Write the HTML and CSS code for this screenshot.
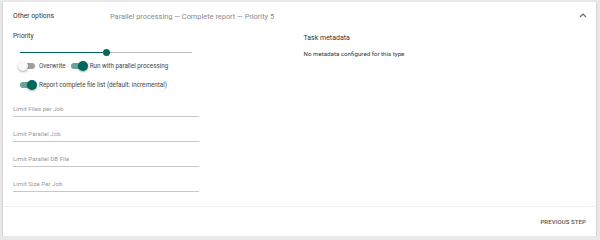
FILE: index.html
```html
<!DOCTYPE html>
<html lang="en">
<head>
    <meta charset="UTF-8">
    <title>Other options</title>
    <link rel="stylesheet" href="styles.css">
</head>
<body>
    <div class="card">
        <div class="panel-header">
            <span class="panel-title">Other options</span>
            <span class="panel-summary">Parallel processing — Complete report — Priority 5</span>
            <svg class="chevron" width="8" height="6" viewBox="0 0 8 6">
                <path d="M1 5 L4 2 L7 5" fill="none" stroke="#666" stroke-width="1.2"/>
            </svg>
        </div>

        <div class="panel-body">
            <div class="col">
                <div class="field-label">Priority</div>
                <div class="slider">
                    <div class="slider-fill"></div>
                    <div class="slider-thumb"></div>
                </div>

                <div class="toggle-row first">
                    <span class="toggle"><span class="knob"></span></span>
                    <span class="toggle-text">Overwrite</span>
                    <span class="toggle on"><span class="knob"></span></span>
                    <span class="toggle-text">Run with parallel processing</span>
                </div>
                <div class="toggle-row">
                    <span class="toggle on"><span class="knob"></span></span>
                    <span class="toggle-text">Report complete file list (default: incremental)</span>
                </div>

                <div class="inputs">
                    <div class="input">Limit Files per Job</div>
                    <div class="input">Limit Parallel Job</div>
                    <div class="input">Limit Parallel DB File</div>
                    <div class="input">Limit Size Per Job</div>
                </div>
            </div>

            <div class="col">
                <div class="meta-title">Task metadata</div>
                <div class="meta-text">No metadata configured for this type</div>
            </div>
        </div>

        <div class="panel-footer">
            <button class="text-button">Previous step</button>
        </div>
    </div>
</body>
</html>
```

FILE: styles.css
```css
body {
    margin: 0;
    background-color: #e9e9e9;
    font-family: Roboto, "Liberation Sans", sans-serif;
    color: #333;
}

.card {
    margin: 2px 4px 0 3px;
    height: 234px;
    background: white;
    box-shadow: 0 1px 2px rgba(0, 0, 0, 0.25);
    display: flex;
    flex-direction: column;
}

.panel-header {
    display: flex;
    align-items: center;
    height: 28px;
    padding: 0 9px 0 10px;
}

.panel-title {
    width: 97px;
    font-size: 6.8px;
    color: #333;
}

.panel-summary {
    flex: 1;
    font-size: 7.4px;
    color: #8a8a8a;
}

.chevron {
    margin-top: -2px;
}

.panel-body {
    flex: 1;
    display: grid;
    grid-template-columns: 1fr 1fr;
    gap: 8px;
    padding: 0 10px;
}

.field-label {
    font-size: 6.5px;
    margin-top: 2px;
}

.slider {
    position: relative;
    width: 172px;
    height: 1px;
    margin: 12px 0 0 7px;
    background: #bdbdbd;
}

.slider-fill {
    width: 86px;
    height: 1px;
    background: #00695c;
}

.slider-thumb {
    position: absolute;
    left: 83px;
    top: -3px;
    width: 7px;
    height: 7px;
    border-radius: 50%;
    background: #00695c;
}

.toggle-row {
    display: flex;
    align-items: center;
    height: 12px;
    margin: 7px 0 0 7px;
}

.toggle-row.first {
    margin-top: 7px;
}

.toggle {
    position: relative;
    width: 15px;
    height: 6px;
    border-radius: 3px;
    background: #9e9e9e;
    margin-right: 4px;
}

.toggle .knob {
    position: absolute;
    left: -2px;
    top: -2px;
    width: 10px;
    height: 10px;
    border-radius: 50%;
    background: #fafafa;
    box-shadow: 0 1px 2px rgba(0, 0, 0, 0.35);
}

.toggle.on {
    background: #6aa59c;
}

.toggle.on .knob {
    left: 7px;
    background: #00695c;
}

.toggle-text {
    font-size: 6.3px;
    color: #444;
    margin-right: 5px;
}

.inputs {
    margin-top: 12px;
    width: 186px;
}

.input {
    display: flex;
    align-items: flex-end;
    box-sizing: border-box;
    font-size: 6.2px;
    color: #9a9a9a;
    height: 14px;
    padding-bottom: 3px;
    margin-bottom: 11px;
    border-bottom: 1px solid #c8c8c8;
}

.input:last-child {
    margin-bottom: 0;
}

.meta-title {
    font-size: 7px;
    margin-top: 4px;
}

.meta-text {
    font-size: 6.2px;
    margin-top: 8px;
}

.panel-footer {
    height: 29px;
    border-top: 1px solid #eeeeee;
    display: flex;
    align-items: center;
    justify-content: flex-end;
    padding-right: 10px;
}

.text-button {
    border: none;
    background: none;
    padding: 0;
    font-family: Roboto, "Liberation Sans", sans-serif;
    font-size: 6px;
    font-weight: 500;
    text-transform: uppercase;
    color: #555;
    letter-spacing: 0.1px;
}
```
